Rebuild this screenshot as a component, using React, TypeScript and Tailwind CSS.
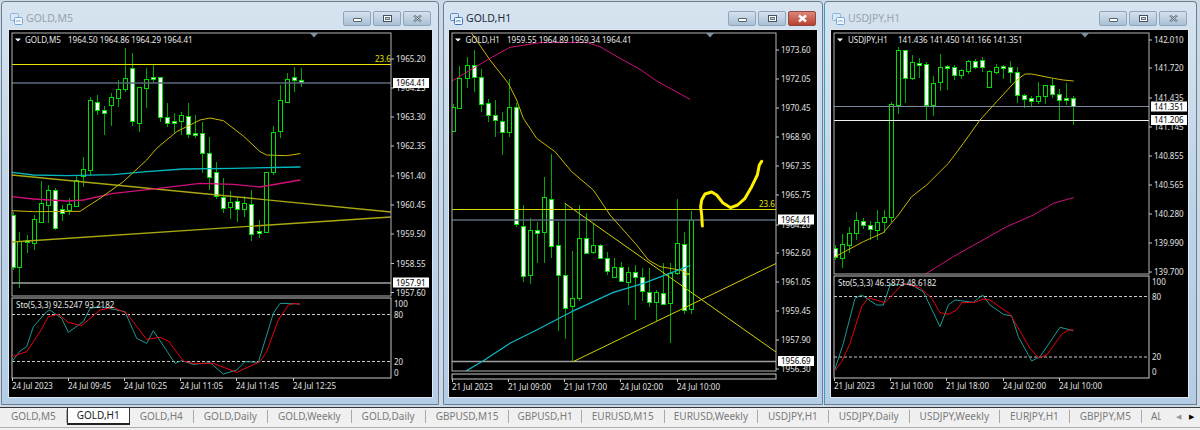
import { useId } from 'react'

type Candle = [number, number, number, number, number, 'w' | 'h']
type Pt = [number, number]

const sharedFont = { fontFamily: '"Noto Sans", "Liberation Sans", sans-serif' }

// x values below are read off a 3x crop, so they get divided by 3
const toPoints = (list: Pt[], ox: number, oy: number) =>
  list.map(([x, y]) => `${ox + x / 3},${oy + y / 3}`).join(' ')

const goldM5Candles: Candle[] = [
  [38, 212, 215, 267, 270, 'w'], [58, 232, 241, 267, 288, 'h'], [80, 235, 240, 242, 253, 'w'], [101, 215, 219, 243, 250, 'h'],
  [122, 181, 203, 222, 223, 'h'], [143, 185, 190, 205, 223, 'h'], [164, 188, 190, 228, 230, 'w'], [185, 205, 209, 213, 221, 'w'],
  [206, 198, 204, 210, 215, 'h'], [227, 175, 180, 206, 207, 'h'], [248, 157, 169, 176, 187, 'h'], [269, 97, 100, 170, 175, 'h'],
  [290, 95, 102, 110, 115, 'w'], [312, 106, 110, 113, 135, 'w'], [333, 93, 97, 105, 126, 'h'], [354, 80, 89, 98, 107, 'h'],
  [375, 48, 78, 89, 92, 'h'], [397, 53, 68, 121, 126, 'w'], [418, 87, 87, 123, 132, 'h'], [439, 68, 79, 88, 108, 'h'],
  [460, 65, 77, 79, 83, 'w'], [481, 77, 77, 117, 122, 'w'], [502, 103, 117, 123, 127, 'w'], [523, 113, 121, 123, 133, 'w'],
  [544, 112, 115, 121, 135, 'h'], [565, 103, 116, 134, 138, 'w'], [586, 115, 133, 135, 138, 'w'], [607, 122, 133, 153, 173, 'w'],
  [628, 137, 153, 177, 190, 'w'], [649, 162, 172, 196, 199, 'w'], [670, 178, 197, 208, 213, 'w'], [691, 191, 202, 207, 219, 'h'],
  [712, 197, 201, 209, 222, 'w'], [733, 196, 203, 209, 217, 'h'], [754, 190, 204, 234, 241, 'w'], [776, 220, 231, 233, 238, 'w'],
  [797, 172, 172, 232, 232, 'h'], [818, 126, 132, 172, 175, 'h'], [839, 85, 100, 131, 138, 'h'], [860, 73, 79, 102, 102, 'h'],
  [881, 67, 77, 80, 92, 'w'], [902, 68, 80, 82, 87, 'w'],
]

const goldH1Candles: Candle[] = [
  [40, 104, 107, 131, 131, 'h'], [58, 66, 78, 108, 108, 'h'], [80, 57, 65, 78, 88, 'h'], [101, 50, 65, 77, 92, 'w'],
  [122, 69, 77, 104, 112, 'w'], [143, 99, 103, 115, 122, 'w'], [164, 100, 115, 120, 137, 'w'], [185, 112, 121, 132, 155, 'w'],
  [206, 79, 107, 132, 137, 'h'], [228, 103, 107, 224, 227, 'w'], [249, 205, 226, 276, 282, 'w'], [270, 218, 230, 275, 284, 'h'],
  [291, 222, 230, 233, 263, 'w'], [312, 177, 197, 232, 263, 'h'], [333, 154, 199, 246, 258, 'w'], [354, 222, 245, 275, 331, 'w'],
  [375, 203, 275, 308, 339, 'w'], [397, 251, 298, 306, 361, 'h'], [418, 205, 238, 298, 301, 'h'], [439, 213, 238, 253, 253, 'w'],
  [460, 223, 245, 252, 254, 'h'], [481, 244, 245, 258, 258, 'w'], [502, 252, 258, 271, 275, 'w'], [523, 258, 267, 277, 278, 'h'],
  [544, 262, 267, 281, 282, 'w'], [565, 267, 272, 282, 305, 'h'], [586, 265, 272, 277, 320, 'w'], [607, 268, 277, 291, 301, 'w'],
  [628, 268, 292, 302, 307, 'w'], [649, 290, 292, 302, 321, 'h'], [670, 263, 293, 304, 305, 'w'], [691, 263, 273, 303, 343, 'h'],
  [712, 199, 243, 273, 275, 'h'], [733, 232, 244, 310, 314, 'w'], [754, 211, 220, 309, 314, 'h'],
]

const usdJpyCandles: Candle[] = [
  [46, 245, 248, 257, 260, 'w'], [66, 234, 244, 258, 268, 'h'], [87, 227, 233, 245, 253, 'h'], [108, 212, 220, 233, 240, 'h'],
  [129, 218, 221, 225, 229, 'w'], [150, 221, 225, 229, 240, 'w'], [171, 210, 222, 230, 240, 'h'], [192, 210, 217, 222, 233, 'h'],
  [213, 102, 104, 217, 222, 'h'], [234, 47, 50, 105, 114, 'h'], [255, 50, 50, 78, 103, 'w'], [276, 55, 62, 78, 80, 'h'],
  [297, 58, 63, 65, 78, 'w'], [318, 62, 64, 105, 120, 'w'], [339, 76, 83, 105, 116, 'h'], [360, 54, 67, 82, 91, 'h'],
  [381, 65, 66, 68, 90, 'w'], [402, 65, 67, 75, 80, 'w'], [423, 69, 70, 75, 79, 'h'], [444, 60, 61, 71, 74, 'h'],
  [465, 59, 61, 67, 69, 'w'], [486, 57, 60, 67, 72, 'w'], [507, 70, 71, 87, 88, 'h'], [528, 64, 67, 72, 74, 'h'],
  [549, 65, 66, 68, 79, 'w'], [570, 61, 67, 72, 83, 'w'], [591, 67, 72, 95, 103, 'w'], [612, 94, 95, 99, 108, 'w'],
  [633, 96, 98, 101, 107, 'w'], [654, 82, 96, 101, 104, 'h'], [675, 85, 85, 96, 104, 'h'], [696, 78, 85, 94, 98, 'w'],
  [717, 89, 94, 100, 120, 'w'], [738, 83, 98, 100, 105, 'w'], [759, 96, 98, 106, 125, 'w'],
]

type Line = { points: string; color: string; width?: number }

type ChartSpec = {
  box: [number, number, number, number]
  right: number
  mainBottom: number
  subTop: number
  subBottom: number
  left: number
  symbolX: number
  valuesX: number
  symbol: string
  values: string
  candles: Candle[]
  candleOx: number
  lines: Line[]
  subLines?: Line[]
  prices: [string, number][]
  tags: [string, number][]
  dates: [string, number][]
  fibX?: number
  fibY?: number
  sto?: { text: string; levels: [string, number, boolean][] }
  notch: number
}

function Chart({ spec }: { spec: ChartSpec }) {
  const id = useId()
  const { left, right, mainBottom, subTop, subBottom } = spec
  const [x, y, w, h] = spec.box
  return (
    <svg width={w} height={h} viewBox={`${x} ${y} ${w} ${h}`} className="block bg-black" fontSize="8" style={sharedFont}>
      <defs>
        <clipPath id={id}>
          <rect x={left} y="33" width={right - left} height={mainBottom - 33} />
        </clipPath>
      </defs>
      <g clipPath={`url(#${id})`}>
        {spec.candles.map(([zx, hi, top, bot, lo, kind]) => {
          const cx = Math.round(spec.candleOx + zx / 3) + 0.5
          return (
            <g key={zx} shapeRendering="crispEdges">
              <line x1={cx} x2={cx} y1={hi} y2={lo} stroke="#00a800" />
              <rect x={cx - 2} y={top + 0.5} width="4" height={bot - top} fill={kind === 'w' ? '#ffffff' : '#000000'} stroke="#00e000" />
            </g>
          )
        })}
        {spec.lines.map((l, i) => (
          <polyline key={i} points={l.points} fill="none" stroke={l.color} strokeWidth={l.width ?? 1} strokeLinecap="round" strokeLinejoin="round" />
        ))}
      </g>
      {spec.fibX !== undefined && <text x={spec.fibX} y={spec.fibY} fill="#e0e000">23.6</text>}

      <rect x={left} y="33" width={right - left} height={mainBottom - 33} fill="none" stroke="#b4b4b4" />
      <rect x={left} y={subTop} width={right - left} height={subBottom - subTop} fill="none" stroke="#c8c8c8" />
      <polygon points={`${spec.notch},33 ${spec.notch + 8},33 ${spec.notch + 4},37.5`} fill="#7d8fa3" />
      <polygon points={`${left + 3},38.5 ${left + 9},38.5 ${left + 6},41.5`} fill="#ffffff" />
      <text x={spec.symbolX} y="43" fill="#e8e8e8">{spec.symbol}</text>
      <text x={spec.valuesX} y="43" fill="#e8e8e8">{spec.values}</text>

      {spec.sto?.levels.map(([label, ly, dashed]) => (
        <g key={label}>
          {dashed && <line x1={left} x2={right} y1={ly} y2={ly} stroke="#c8c8c8" strokeDasharray="3 2" />}
          <text x={right + 3} y={ly + 3} fill="#e0e0e0">{label}</text>
        </g>
      ))}
      {spec.subLines?.map((l, i) => (
        <polyline key={i} points={l.points} fill="none" stroke={l.color} />
      ))}
      {spec.sto && <text x={left + 4} y={subTop + 10} fill="#e8e8e8">{spec.sto.text}</text>}

      {spec.prices.map(([label, py]) => (
        <g key={label}>
          <line x1={right} x2={right + 3} y1={py} y2={py} stroke="#c8c8c8" />
          <text x={right + 5} y={py + 3} fill="#e0e0e0">{label}</text>
        </g>
      ))}
      {spec.tags.map(([label, ty]) => (
        <g key={label}>
          <rect x={right + 2} y={ty - 5} width="36" height="10" fill="#ffffff" />
          <text x={right + 5} y={ty + 3} fill="#000000">{label}</text>
        </g>
      ))}
      {spec.dates.map(([label, dx]) => (
        <g key={label}>
          <line x1={dx + 0.5} x2={dx + 0.5} y1={subBottom} y2={subBottom + 3} stroke="#c8c8c8" />
          <text x={dx} y={subBottom + 11} fill="#e0e0e0">{label}</text>
        </g>
      ))}
    </svg>
  )
}

const YELLOW = '#d2d200'
const OLIVE = '#a8a810'

const m5: ChartSpec = {
  box: [9, 30, 423, 367], left: 12, right: 391, mainBottom: 296, subTop: 298, subBottom: 378, notch: 310,
  symbolX: 25, valuesX: 68, symbol: 'GOLD,M5', values: '1964.50 1964.86 1964.29 1964.41',
  candles: goldM5Candles, candleOx: 0, fibX: 375, fibY: 62,
  lines: [
    { points: '12,64.5 391,64.5', color: '#e6e600' },
    { points: '12,83 391,83', color: '#5a6a7c', width: 1.5 },
    { points: '12,283 391,283', color: '#a0a0a0', width: 1.5 },
    { points: '12,175 391,212', color: OLIVE, width: 1.4 },
    { points: '12,242 391,217', color: OLIVE, width: 1.4 },
    { points: toPoints([[36, 517], [100, 525], [200, 527], [340, 524], [440, 515], [550, 507], [700, 505], [900, 501]], 0, 0), color: '#00b8c0', width: 1.4 },
    { points: toPoints([[36, 590], [100, 597], [200, 603], [250, 600], [340, 580], [450, 568], [600, 550], [700, 553], [780, 561], [900, 540]], 0, 0), color: '#d0107a', width: 1.3 },
    { points: toPoints([[36, 632], [100, 635], [240, 634], [300, 595], [370, 545], [440, 480], [470, 445], [530, 395], [600, 360], [630, 354], [670, 362], [730, 408], [780, 455], [800, 465], [860, 467], [900, 461]], 0, 0), color: '#c8b800' },
  ],
  subLines: [
    { points: toPoints([[36, 440], [60, 408], [80, 395], [100, 335], [140, 290], [150, 285], [185, 310], [205, 352], [250, 320], [270, 280], [300, 275], [375, 290], [410, 370], [440, 385], [460, 347], [525, 445], [545, 437], [580, 448], [630, 443], [670, 477], [710, 465], [735, 440], [775, 442], [820, 295], [840, 265], [900, 267]], 0, 215), color: '#1c9a96' },
    { points: toPoints([[36, 425], [80, 410], [120, 350], [145, 305], [175, 298], [205, 322], [245, 332], [300, 285], [340, 277], [380, 295], [440, 373], [480, 367], [505, 378], [550, 438], [580, 445], [640, 445], [710, 472], [780, 440], [800, 410], [835, 315], [865, 270], [885, 265], [900, 268]], 0, 215), color: '#e80010' },
  ],
  prices: [['1965.20', 59], ['1964.25', 88], ['1963.30', 117], ['1962.35', 146], ['1961.40', 176], ['1960.45', 205], ['1959.50', 234], ['1958.55', 263.5], ['1957.60', 292.5]],
  tags: [['1964.41', 83], ['1957.91', 282.5]],
  dates: [['24 Jul 2023', 12], ['24 Jul 09:45', 68], ['24 Jul 10:25', 124], ['24 Jul 11:05', 180], ['24 Jul 11:45', 236], ['24 Jul 12:25', 293]],
  sto: { text: 'Sto(5,3,3) 92.5247 93.2182', levels: [['100', 304, false], ['80', 314.5, true], ['20', 361.5, true], ['0', 372.5, false]] },
}

const h1: ChartSpec = {
  box: [449, 30, 368, 367], left: 452, right: 776, mainBottom: 371, subTop: 374, subBottom: 379, notch: 706,
  symbolX: 465.5, valuesX: 507, symbol: 'GOLD,H1', values: '1959.55 1964.89 1959.34 1964.41',
  candles: goldH1Candles, candleOx: 440, fibX: 759, fibY: 207,
  lines: [
    { points: '452,209.5 776,209.5', color: '#d8d800' },
    { points: '452,220 776,220', color: '#5a6a7c', width: 1.5 },
    { points: '452,361.5 776,361.5', color: '#a0a0a0', width: 1.5 },
    { points: `${toPoints([[95, 100], [150, 180], [205, 250], [230, 300], [250, 355], [290, 415], [345, 455], [395, 515], [460, 570]], 440, 0)} ${toPoints([[510, 0], [590, 90], [625, 135], [660, 155], [720, 165], [750, 178], [735, 180]], 440, 215)}`, color: '#c8b800' },
    { points: toPoints([[36, 243], [100, 205], [150, 175], [210, 142], [300, 128], [440, 127], [480, 140], [540, 175], [600, 208], [650, 243], [750, 298]], 440, 0), color: '#d0107a' },
    { points: toPoints([[78, 468], [130, 437], [210, 385], [290, 345], [395, 290], [520, 232], [610, 205], [750, 152]], 440, 215), color: '#10b8c8', width: 1.2 },
    { points: '565,203.5 776,352', color: YELLOW },
    { points: '573.5,361.5 776,263.5', color: YELLOW },
    { points: `${toPoints([[787, 33], [785, 0]], 440, 215)} ${toPoints([[782, 620], [785, 600], [795, 582], [815, 576], [830, 585], [848, 608], [872, 623], [893, 615], [915, 595], [935, 560], [952, 525], [958, 495], [965, 484]], 440, 0)}`, color: '#fff000', width: 3 },
  ],
  prices: [['1973.60', 50], ['1972.05', 79], ['1970.45', 108], ['1968.90', 137], ['1967.35', 166], ['1965.75', 195], ['1964.20', 225], ['1962.60', 253], ['1961.05', 282], ['1959.45', 311], ['1957.90', 340], ['1956.30', 369]],
  tags: [['1964.41', 219.5], ['1956.69', 361]],
  dates: [['21 Jul 2023', 452], ['21 Jul 09:00', 508], ['21 Jul 17:00', 564], ['24 Jul 02:00', 620], ['24 Jul 10:00', 677]],
}

const jpy: ChartSpec = {
  box: [831, 30, 357, 367], left: 834, right: 1149, mainBottom: 274, subTop: 276, subBottom: 378, notch: 1081,
  symbolX: 848, valuesX: 898, symbol: 'USDJPY,H1', values: '141.436 141.450 141.166 141.351',
  candles: usdJpyCandles, candleOx: 820,
  lines: [
    { points: '834,106.5 1149,106.5', color: '#7a8a9c' },
    { points: '834,120.5 1149,120.5', color: '#f0f0f0', width: 1.2 },
    { points: `${toPoints([[46, 125], [130, 80], [190, 53], [235, 0]], 820, 215)} ${toPoints([[275, 590], [320, 555], [385, 490], [430, 430], [480, 360], [530, 305], [590, 240], [615, 222], [635, 222], [700, 235], [730, 240], [760, 243]], 820, 0)}`, color: '#c8b800' },
    { points: `${toPoints([[320, 175], [400, 125], [560, 35], [640, 0]], 820, 215)} ${toPoints([[700, 610], [760, 593]], 820, 0)}`, color: '#d0107a' },
  ],
  subLines: [
    { points: toPoints([[44, 465], [70, 385], [105, 250], [125, 240], [170, 270], [190, 270], [210, 210], [270, 207], [310, 230], [360, 335], [385, 270], [405, 255], [460, 262], [488, 240], [510, 270], [550, 298], [575, 303], [595, 365], [635, 438], [660, 425], [720, 337], [760, 347]], 820, 215), color: '#1c9a96' },
    { points: toPoints([[44, 468], [65, 440], [90, 385], [125, 275], [145, 248], [195, 263], [250, 205], [300, 218], [335, 250], [360, 293], [385, 298], [410, 285], [425, 263], [465, 262], [490, 252], [510, 255], [570, 297], [630, 400], [655, 428], [680, 420], [725, 358], [745, 345], [760, 345]], 820, 215), color: '#e80010' },
  ],
  prices: [['142.010', 40], ['141.720', 68], ['141.435', 98], ['141.145', 127], ['140.855', 156], ['140.565', 185], ['140.280', 214], ['139.990', 243], ['139.700', 272]],
  tags: [['141.351', 106.5], ['141.206', 120]],
  dates: [['21 Jul 2023', 834], ['21 Jul 10:00', 890], ['21 Jul 18:00', 946], ['24 Jul 02:00', 1003], ['24 Jul 10:00', 1059]],
  sto: { text: 'Sto(5,3,3) 46.5873 48.6182', levels: [['100', 282, false], ['80', 296.5, true], ['20', 357, true], ['0', 372, false]] },
}

function WinIcon({ active }: { active: boolean }) {
  return (
    <svg width="13" height="12" viewBox="0 0 13 12" className="ml-[2px] shrink-0">
      <rect x="0.5" y="0.5" width="8" height="7" rx="1" fill="#dbe9f6" stroke={active ? '#5a8cc0' : '#8db4da'} />
      <rect x="4.5" y="4.5" width="8" height="7" rx="1" fill="#eef5fc" stroke={active ? '#3f78b4' : '#7aa6d2'} />
      <path d="M6 9l1-1.5 1 1 1-1.5 1.5 2" fill="none" stroke={active ? '#3f78b4' : '#7aa6d2'} strokeWidth="0.8" />
    </svg>
  )
}

function TitleButton({ kind, danger }: { kind: 'min' | 'max' | 'close'; danger?: boolean }) {
  return (
    <div
      className={`flex h-[15px] w-[28px] items-center justify-center rounded-[2px] border ${
        danger
          ? 'border-[#8e4a42] bg-gradient-to-b from-[#dd8578] to-[#b8402f]'
          : 'border-[#8fa5b9] bg-gradient-to-b from-[#d5e2ee] to-[#a9c0d5]'
      }`}
    >
      {kind === 'min' && <div className="mt-[3px] h-[4px] w-[9px] rounded-[1px] border border-[#55616d] bg-white" />}
      {kind === 'max' && (
        <div className="flex h-[7px] w-[9px] items-center justify-center border border-[#444f5a] bg-white">
          <div className="h-[3px] w-[5px] border border-[#667380] bg-[#c9d6e2]" />
        </div>
      )}
      {kind === 'close' && (
        <svg width="11" height="9" viewBox="0 0 11 9">
          <path d="M2 1.5l7 6M9 1.5l-7 6" stroke={danger ? '#ffffff' : '#4f5b66'} strokeWidth={danger ? 2.4 : 2.2} fill="none" />
          {!danger && <path d="M2 1.5l7 6M9 1.5l-7 6" stroke="#e8eff5" strokeWidth="0.8" fill="none" />}
        </svg>
      )}
    </div>
  )
}

function ChartWindow({ title, active, spec, frameClass, paddingClass }: { title: string; active?: boolean; spec: ChartSpec; frameClass: string; paddingClass: string }) {
  return (
    <div className={`flex h-[404px] flex-col rounded-t-[4px] border border-[#6f7d8a] bg-gradient-to-b from-[#d7e4f0] via-[#bdd3e8] to-[#b4cde6] ${frameClass}`}>
      <div className={`flex h-[27px] items-center justify-between pt-[6px] ${paddingClass}`}>
        <div className="flex items-center gap-[3px]">
          <WinIcon active={!!active} />
          <span className={`text-[10.5px] ${active ? 'text-[#222d38]' : 'text-[#98a3ae]'}`}>{title}</span>
        </div>
        <div className="mr-[2px] flex gap-[2px]">
          <TitleButton kind="min" />
          <TitleButton kind="max" />
          <TitleButton kind="close" danger={active} />
        </div>
      </div>
      <div className={paddingClass}>
        <div className="border border-[#dfe8f1]">
          <Chart spec={spec} />
        </div>
      </div>
    </div>
  )
}

const tabs: [string, string][] = [
  ['GOLD,M5', 'px-[10px]'], ['GOLD,H1', 'px-[9px]'], ['GOLD,H4', 'px-[10px]'], ['GOLD,Daily', 'px-[10px]'],
  ['GOLD,Weekly', 'px-[10px]'], ['GOLD,Daily', 'px-[10px]'], ['GBPUSD,M15', 'px-[10px]'], ['GBPUSD,H1', 'px-[8px]'],
  ['EURUSD,M15', 'px-[10px]'], ['EURUSD,Weekly', 'px-[9px]'], ['USDJPY,H1', 'px-[10px]'], ['USDJPY,Daily', 'px-[10px]'],
  ['USDJPY,Weekly', 'px-[10px]'], ['EURJPY,H1', 'px-[10px]'], ['GBPJPY,M5', 'px-[10px]'],
]

export default function App() {
  return (
    <div className="h-[430px] w-[1200px] overflow-hidden bg-[#b9d0e6]" style={sharedFont}>
      <div className="flex h-[407px] items-start bg-[#c9d9e8] pl-[1px] pt-[1px]">
        <ChartWindow title="GOLD,M5" spec={m5} frameClass="w-[438px]" paddingClass="pl-[6px] pr-[5px]" />
        <ChartWindow title="GOLD,H1" active spec={h1} frameClass="ml-[4px] w-[380px]" paddingClass="px-[4px]" />
        <ChartWindow title="USDJPY,H1" spec={jpy} frameClass="ml-[1px] w-[373px] border-l-[#3a9ac8]" paddingClass="pl-[5px] pr-[7px]" />
      </div>
      <div className="flex h-[20px] items-start overflow-hidden border-t border-[#333333] bg-[#f0f0f0] pl-[1px] text-[10px] text-[#7b7b7b]">
        {tabs.map(([tab, pad], i) => (
          <div
            key={i}
            className={
              i === 1
                ? `flex h-[17px] items-center border-x border-b-2 border-[#222222] border-x-[#333333] bg-white text-[#222222] ${pad}`
                : `my-[2px] flex h-[13px] items-center border-r border-[#a8a8a8] ${pad}`
            }
          >
            {tab}
          </div>
        ))}
        <div className="my-[2px] flex h-[13px] w-[19px] items-center overflow-hidden pl-[9px]">AL</div>
        <span className="ml-auto mr-[8px] mt-[5px] text-[7px] leading-[8px] text-[#999999]">◀</span>
        <span className="mr-[6px] mt-[5px] text-[7px] leading-[8px] text-black">▶</span>
      </div>
      <div className="h-[3px] border-t border-[#b0b0b0] bg-[#f0f0f0]" />
    </div>
  )
}
